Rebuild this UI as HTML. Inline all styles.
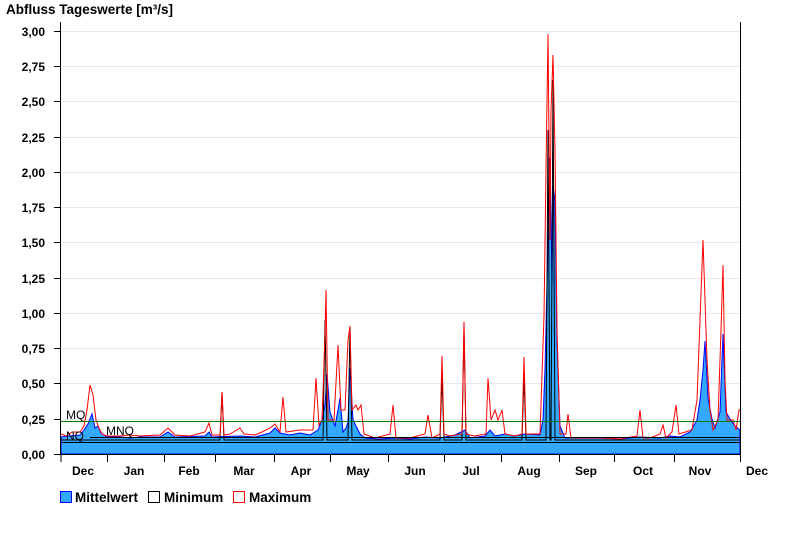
<!DOCTYPE html>
<html><head><meta charset="utf-8"><style>
body{margin:0;background:#fff;width:800px;height:550px;overflow:hidden;font-family:"Liberation Sans",sans-serif}
svg text{font-family:"Liberation Sans",sans-serif;font-weight:bold;font-size:12px;fill:#000}
svg text.n{font-weight:normal}
</style></head><body>
<svg width="800" height="550" xmlns="http://www.w3.org/2000/svg">
<text x="6" y="14" style="font-size:13.5px">Abfluss Tageswerte [m³/s]</text>
<g stroke="#e8e8e8" stroke-width="1">
<line x1="61" y1="31.5" x2="740" y2="31.5"/><line x1="61" y1="66.5" x2="740" y2="66.5"/>
<line x1="61" y1="101.5" x2="740" y2="101.5"/><line x1="61" y1="137.5" x2="740" y2="137.5"/>
<line x1="61" y1="172.5" x2="740" y2="172.5"/><line x1="61" y1="207.5" x2="740" y2="207.5"/>
<line x1="61" y1="242.5" x2="740" y2="242.5"/><line x1="61" y1="278.5" x2="740" y2="278.5"/>
<line x1="61" y1="313.5" x2="740" y2="313.5"/><line x1="61" y1="348.5" x2="740" y2="348.5"/>
<line x1="61" y1="383.5" x2="740" y2="383.5"/><line x1="61" y1="419.5" x2="740" y2="419.5"/>
</g>
<g text-anchor="end">
<text x="45" y="36">3,00</text><text x="45" y="71">2,75</text><text x="45" y="106">2,50</text>
<text x="45" y="142">2,25</text><text x="45" y="177">2,00</text><text x="45" y="212">1,75</text>
<text x="45" y="247">1,50</text><text x="45" y="283">1,25</text><text x="45" y="318">1,00</text>
<text x="45" y="353">0,75</text><text x="45" y="388">0,50</text><text x="45" y="424">0,25</text>
<text x="45" y="459">0,00</text>
</g>
<g stroke="#000"><line x1="54" y1="31.5" x2="60" y2="31.5"/><line x1="54" y1="66.5" x2="60" y2="66.5"/><line x1="54" y1="101.5" x2="60" y2="101.5"/><line x1="54" y1="137.5" x2="60" y2="137.5"/><line x1="54" y1="172.5" x2="60" y2="172.5"/><line x1="54" y1="207.5" x2="60" y2="207.5"/><line x1="54" y1="242.5" x2="60" y2="242.5"/><line x1="54" y1="278.5" x2="60" y2="278.5"/><line x1="54" y1="313.5" x2="60" y2="313.5"/><line x1="54" y1="348.5" x2="60" y2="348.5"/><line x1="54" y1="383.5" x2="60" y2="383.5"/><line x1="54" y1="419.5" x2="60" y2="419.5"/><line x1="54" y1="454.5" x2="60" y2="454.5"/></g>
<!-- mean area -->
<polygon fill="#33aaff" stroke="#0000ff" stroke-width="1" points="61,454 61,437 70,436 80,435 84,430 88,424 92,414 95,428 98,426 101,433 107,437 120,437 130,438 140,437 160,437 168,432 175,437 205,436 209,432 212,437 240,436 255,437 270,433 275,428 280,433 290,435 300,433 310,435 318,430 322,420 325,405 327,374 330,412 335,426 338,410 340,398 343,432 346,428 348,422 350,368 353,420 356,426 360,434 365,438 380,439 395,438 410,439 425,437 440,438 455,435 465,430 470,438 485,436 490,430 495,436 505,434 515,436 525,434 540,435 543,420 545,369 548,242 550,158 552,285 553,186 555,200 557,341 560,426 565,438 600,438 620,439 640,437 660,438 670,436 680,437 690,432 697,420 700,400 703,370 705,341 708,398 712,419 715,428 720,412 723,334 726,412 730,419 735,426 740,430 740,454"/>
<!-- minimum spikes -->
<polyline fill="none" stroke="#000" stroke-width="1" points="61,440 220,440 222,392 224,440 323,440 325,320 327,440 348,440 350,327 352,440 440,440 442,376 444,440 462,440 464,327 466,440 522,440 524,376 526,440 546,440 548,130 550,440 551,440 553,80 555,440 740,440"/>
<!-- maximum -->
<polyline fill="none" stroke="#ff0000" stroke-width="1" points="61,434 66,436 72,432 80,432 84,426 87,410 90,385 93,395 96,420 99,428 102,434 107,436 120,436 130,435 140,436 160,435 168,428 175,435 190,436 205,432 209,423 212,435 220,435 222,392 224,435 230,434 240,428 244,434 255,435 262,432 270,428 275,424 280,432 283,397 286,432 300,430 313,430 316,378 319,425 322,420 325,335 326,290 328,420 334,420 338,345 341,410 345,410 348,340 350,326 352,410 356,405 358,410 361,405 364,434 375,438 390,434 393,405 396,438 410,438 425,434 428,415 432,438 440,434 442,356 444,434 450,436 462,434 464,322 466,434 474,436 486,434 488,378 491,420 495,410 498,420 502,410 505,434 515,436 522,434 524,357 526,434 540,434 544,316 546,170 548,34 550,240 551,110 553,55 555,150 557,330 560,434 566,434 568,414 571,438 600,438 620,439 637,436 640,410 643,438 650,438 660,434 663,425 666,438 672,432 676,405 679,434 692,430 697,400 700,320 703,240 705,300 707,360 710,410 713,430 718,420 721,330 723,265 725,380 727,420 733,420 736,430 739,410 740,410"/>
<line x1="61" y1="421.5" x2="740" y2="421.5" stroke="#007700"/>
<line x1="90" y1="437.5" x2="740" y2="437.5" stroke="#000"/>
<line x1="61" y1="442.5" x2="740" y2="442.5" stroke="#000"/>
<text x="66" y="419" class="n" style="font-size:12px">MQ</text>
<text x="106" y="435" class="n" style="font-size:12px">MNQ</text>
<text x="66" y="440" class="n" style="font-size:12px">NQ</text>
<line x1="60.5" y1="22" x2="60.5" y2="454" stroke="#000"/>
<line x1="740.5" y1="22" x2="740.5" y2="454" stroke="#000"/>
<line x1="60" y1="454.5" x2="741" y2="454.5" stroke="#000"/>
<g stroke="#000"><line x1="61" y1="454" x2="61" y2="462"/><line x1="107.5" y1="454" x2="107.5" y2="462"/><line x1="164.5" y1="454" x2="164.5" y2="462"/><line x1="215.5" y1="454" x2="215.5" y2="462"/><line x1="274.5" y1="454" x2="274.5" y2="462"/><line x1="330.5" y1="454" x2="330.5" y2="462"/><line x1="388.5" y1="454" x2="388.5" y2="462"/><line x1="444.5" y1="454" x2="444.5" y2="462"/><line x1="501.5" y1="454" x2="501.5" y2="462"/><line x1="559.5" y1="454" x2="559.5" y2="462"/><line x1="614.5" y1="454" x2="614.5" y2="462"/><line x1="674.5" y1="454" x2="674.5" y2="462"/><line x1="740.5" y1="454" x2="740.5" y2="462"/></g>
<g text-anchor="middle">
<text x="83" y="475">Dec</text><text x="134" y="475">Jan</text><text x="189" y="475">Feb</text><text x="244" y="475">Mar</text><text x="301" y="475">Apr</text><text x="358" y="475">May</text><text x="415" y="475">Jun</text><text x="471" y="475">Jul</text><text x="529" y="475">Aug</text><text x="586" y="475">Sep</text><text x="643" y="475">Oct</text><text x="700" y="475">Nov</text><text x="757" y="475">Dec</text>
</g>
<rect x="60.5" y="491.5" width="11" height="11" fill="#33aaff" stroke="#0000ff"/>
<text x="75" y="502" style="font-size:13.5px">Mittelwert</text>
<rect x="148.5" y="491.5" width="11" height="11" fill="#fff" stroke="#000"/>
<text x="164" y="502" style="font-size:13.5px">Minimum</text>
<rect x="233.5" y="491.5" width="11" height="11" fill="#fff" stroke="#ff0000"/>
<text x="249" y="502" style="font-size:13.5px">Maximum</text>
</svg>
</body></html>
